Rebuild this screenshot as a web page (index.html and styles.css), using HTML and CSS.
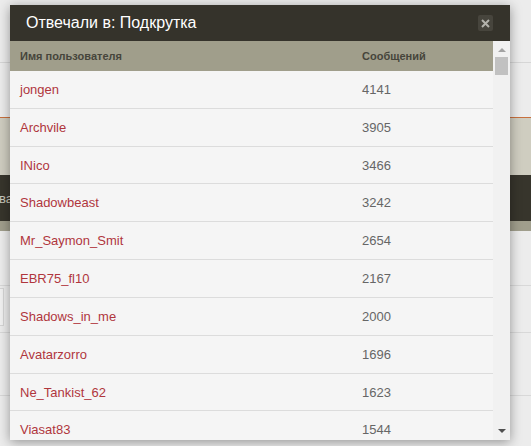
FILE: index.html
```html
<!DOCTYPE html>
<html lang="ru">
<head>
<meta charset="utf-8">
<title>Отвечали в: Подкрутка</title>
<link rel="stylesheet" href="styles.css">
</head>
<body>
<div class="page">
  <div class="bg-top"></div>
  <div class="bg-second"></div>
  <div class="bg-beige"></div>
  <div class="bg-dark"><span class="bg-dark-text">ва</span></div>
  <div class="bg-khaki"></div>
  <div class="bg-rest">
    <div class="bg-line l1"></div>
    <div class="bg-line l2"><div class="bg-input"></div></div>
    <div class="bg-line l3"></div>
  </div>
</div>

<div class="modal">
  <div class="modal-head">
    <span class="modal-title">Отвечали в: Подкрутка</span>
    <span class="modal-close">
      <svg width="9" height="9" viewBox="0 0 9 9"><path d="M1 1 L8 8 M8 1 L1 8" stroke="#b4b3ac" stroke-width="2" fill="none"/></svg>
    </span>
  </div>
  <div class="modal-body">
    <div class="table">
      <div class="thead">
        <div class="c1">Имя пользователя</div>
        <div class="c2">Сообщений</div>
      </div>
      <div class="row"><a class="c1">jongen</a><div class="c2">4141</div></div>
      <div class="row"><a class="c1">Archvile</a><div class="c2">3905</div></div>
      <div class="row"><a class="c1">INico</a><div class="c2">3466</div></div>
      <div class="row"><a class="c1">Shadowbeast</a><div class="c2">3242</div></div>
      <div class="row"><a class="c1">Mr_Saymon_Smit</a><div class="c2">2654</div></div>
      <div class="row"><a class="c1">EBR75_fl10</a><div class="c2">2167</div></div>
      <div class="row"><a class="c1">Shadows_in_me</a><div class="c2">2000</div></div>
      <div class="row"><a class="c1">Avatarzorro</a><div class="c2">1696</div></div>
      <div class="row"><a class="c1">Ne_Tankist_62</a><div class="c2">1623</div></div>
      <div class="row"><a class="c1">Viasat83</a><div class="c2">1544</div></div>
    </div>
    <div class="scrollbar">
      <div class="sb-up"></div>
      <div class="sb-thumb"></div>
      <div class="sb-space"></div>
      <div class="sb-down"></div>
    </div>
  </div>
</div>
</body>
</html>
```

FILE: styles.css
```css
* { box-sizing: border-box; }
html, body { margin: 0; padding: 0; }
body {
  width: 531px;
  height: 446px;
  overflow: hidden;
  font-family: "Liberation Sans", Arial, sans-serif;
  background: #ebebeb;
  position: relative;
}

/* background page */
.page { width: 531px; height: 446px; display: flex; flex-direction: column; }
.bg-top { height: 63px; border-bottom: 1px solid #d6d6d6; background: #ececec; }
.bg-second { height: 55px; border-bottom: 1px solid #c8703e; background: #ececec; }
.bg-beige { height: 57px; background: #cfcdc0; }
.bg-dark {
  height: 46px;
  background: #37352c;
  display: flex;
  align-items: center;
  font-size: 13px;
  color: #c9c7bb;
}
.bg-dark-text { margin-left: -1px; }
.bg-khaki { height: 10px; background: #a09e8c; }
.bg-rest { flex: 1; background: #ececec; display: flex; flex-direction: column; }
.bg-line { border-bottom: 1px solid #d8d8d8; }
.l1 { height: 55px; }
.l2 { height: 47px; display: flex; align-items: flex-end; padding-bottom: 6px; }
.l3 { height: 63px; }
.bg-input { width: 4px; height: 38px; border: 1px solid #d4d4d4; border-left: none; background: #f1f1f1; }

/* modal */
.modal {
  position: absolute;
  left: 10px;
  top: 5px;
  width: 500px;
  height: 435px;
  background: #f5f5f5;
  box-shadow: 0 2px 11px rgba(0, 0, 0, 0.38);
  display: flex;
  flex-direction: column;
  overflow: hidden;
}
.modal-head {
  height: 36px;
  flex: none;
  background: #35332b;
  display: flex;
  align-items: center;
  justify-content: space-between;
  padding: 0 17px 0 16px;
}
.modal-title {
  color: #ffffff;
  font-size: 16px;
  line-height: 20px;
}
.modal-close {
  width: 15px;
  height: 16px;
  background: #47453d;
  border-radius: 2px;
  display: flex;
  align-items: center;
  justify-content: center;
}
.modal-close svg { display: block; }

.modal-body { flex: 1; display: flex; overflow: hidden; min-height: 0; }
.table { flex: 1; display: flex; flex-direction: column; }
.thead {
  height: 30px;
  flex: none;
  background: #a09e8b;
  display: flex;
  align-items: center;
  font-size: 11px;
  font-weight: bold;
  color: #46453b;
}
.c1 { width: 342px; padding-left: 10px; }
.c2 { flex: 1; padding-left: 10px; }
.row {
  height: 37.84px;
  flex: none;
  display: flex;
  align-items: center;
  border-bottom: 1px solid #dcdcdc;
  font-size: 13px;
  background: #f5f5f5;
}
.row .c1 { color: #b0363d; text-decoration: none; }
.row .c2 { color: #666666; }

.scrollbar {
  width: 17px;
  flex: none;
  background: #f1f1f1;
  display: flex;
  flex-direction: column;
  align-items: center;
}
.sb-up {
  margin-top: 7px;
  width: 0; height: 0;
  border-left: 4px solid transparent;
  border-right: 4px solid transparent;
  border-bottom: 4px solid #a3a3a3;
}
.sb-thumb {
  margin-top: 5px;
  width: 13px;
  height: 18px;
  background: #c1c1c1;
}
.sb-space { flex: 1; }
.sb-down {
  margin-bottom: 7px;
  width: 0; height: 0;
  border-left: 4px solid transparent;
  border-right: 4px solid transparent;
  border-top: 4px solid #505050;
}
```
